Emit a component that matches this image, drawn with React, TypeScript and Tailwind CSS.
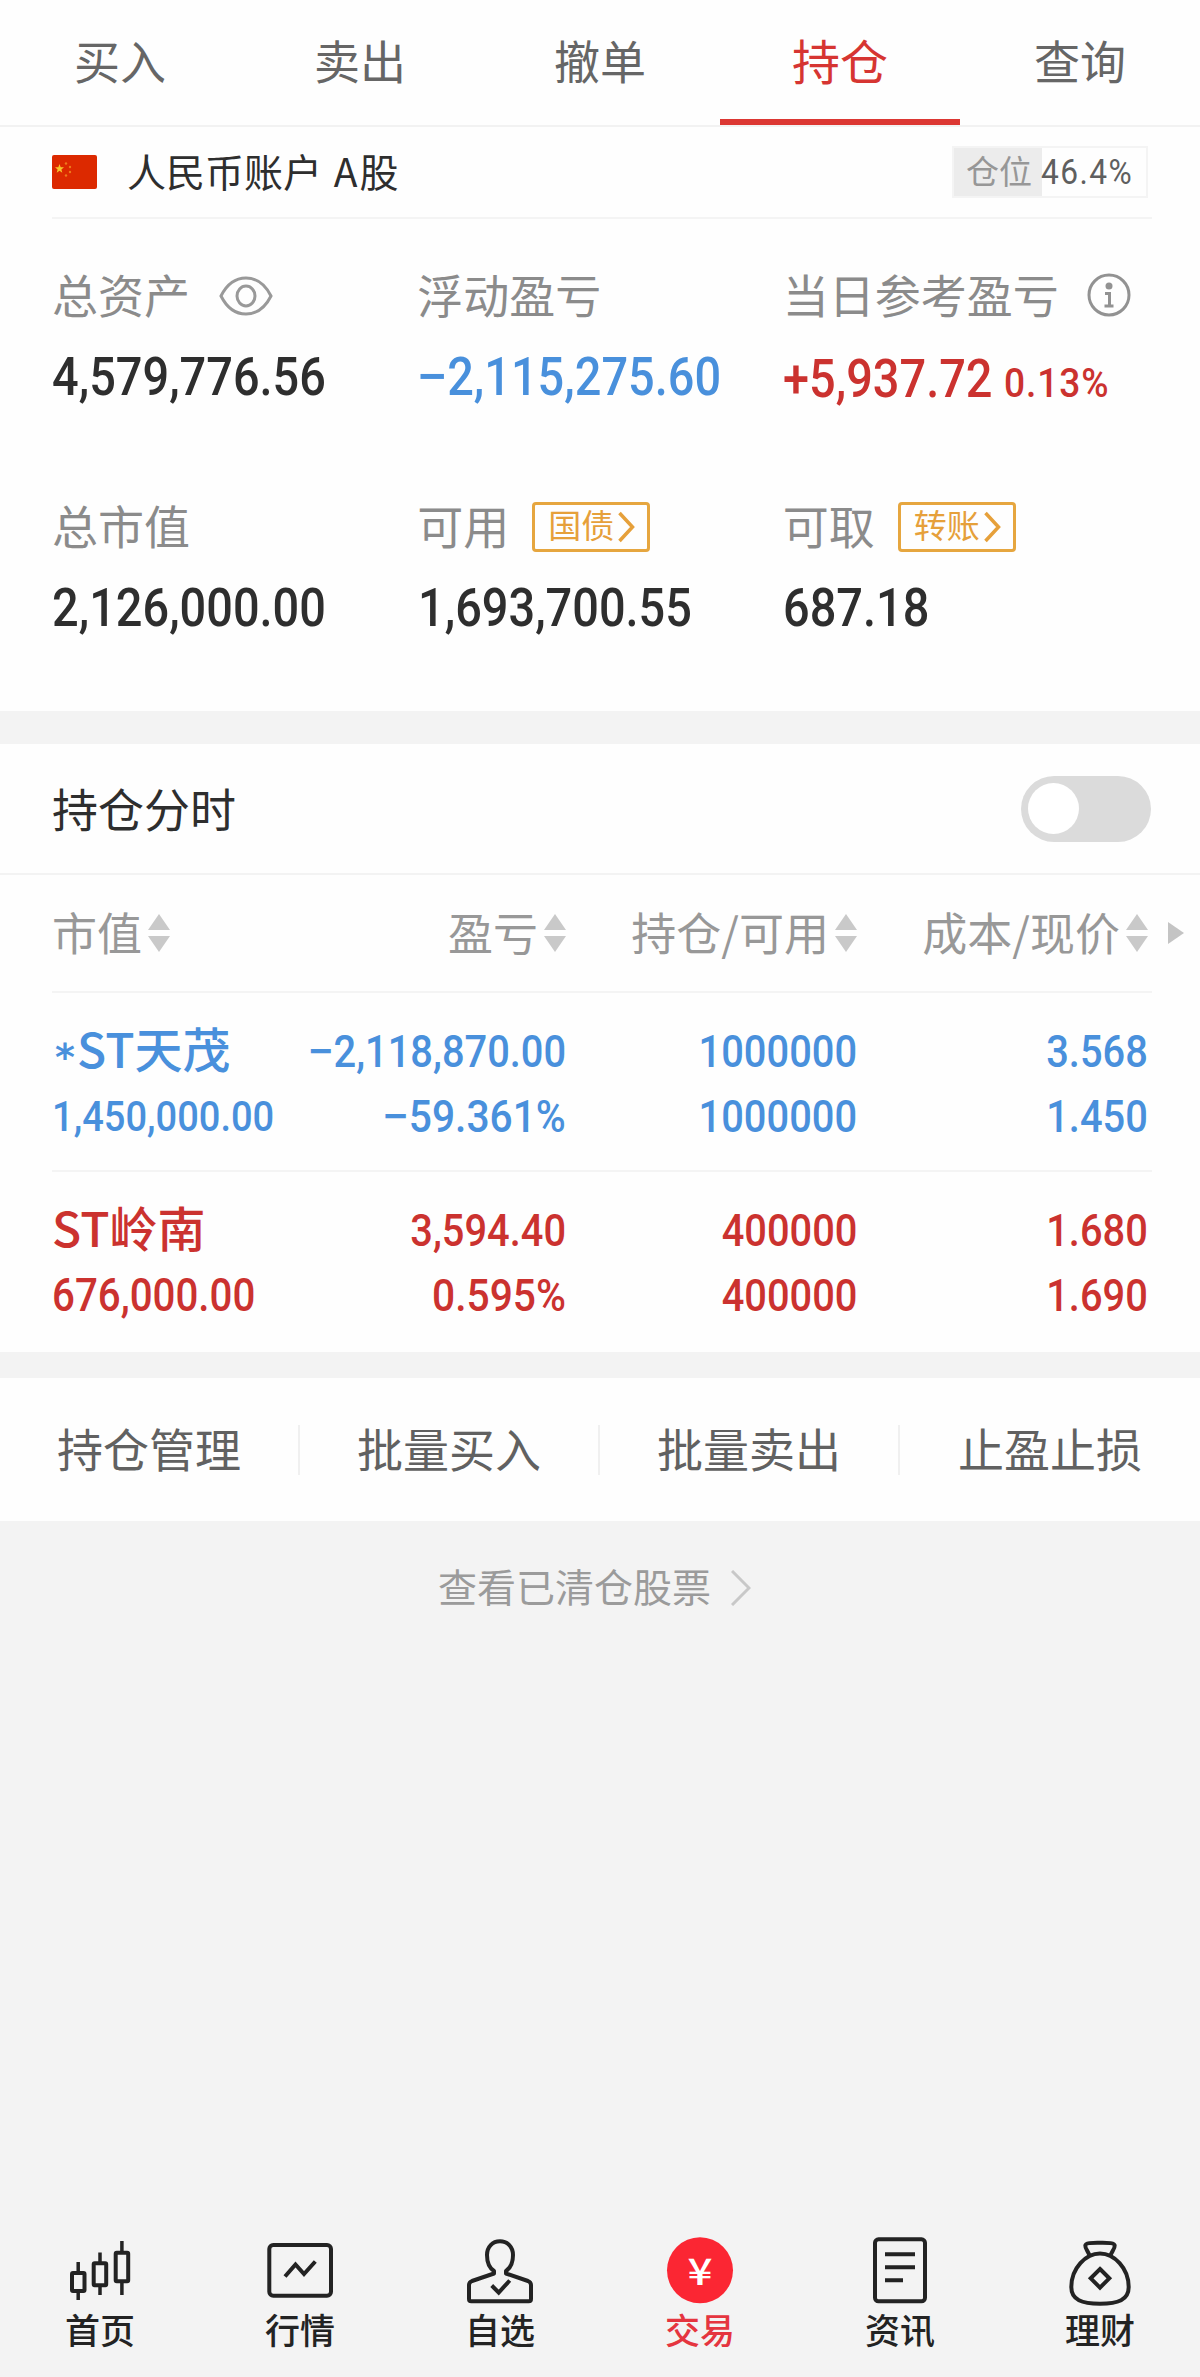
import { ReactNode } from "react";

const tabs = ["买入", "卖出", "撤单", "持仓", "查询"];
const actions = ["持仓管理", "批量买入", "批量卖出", "止盈止损"];

const holdings = [
  {
    star: true,
    name: "ST天茂",
    color: "text-[#4990dc]",
    value: "1,450,000.00",
    valueSize: "text-[43px]",
    cols: [
      ["−2,118,870.00", "−59.361%"],
      ["1000000", "1000000"],
      ["3.568", "1.450"],
    ],
  },
  {
    star: false,
    name: "ST岭南",
    color: "text-[#cb322f]",
    value: "676,000.00",
    valueSize: "text-[45.5px]",
    cols: [
      ["3,594.40", "0.595%"],
      ["400000", "400000"],
      ["1.680", "1.690"],
    ],
  },
];

function Num({ children, className = "" }: { children: string; className?: string }) {
  const negative = children.startsWith("−");
  const scale = children.endsWith("%") ? "scale-x-[.905]" : "scale-x-[.885]";
  return (
    <span className={`inline-block whitespace-nowrap font-[Roboto,sans-serif] font-medium leading-none ${scale} ${className}`}>
      {negative && <span className="mr-[2px] inline-block scale-x-[1.2]">−</span>}
      {negative ? children.slice(1) : children}
    </span>
  );
}

function Label({ children }: { children: ReactNode }) {
  return <div className="flex h-12 items-center text-[46px] leading-none text-[#8b8b8b]">{children}</div>;
}

function Tag({ children }: { children: ReactNode }) {
  return (
    <button className="ml-[23px] mt-[5px] flex h-[50px] w-[118px] items-center rounded-[4px] border-[3px] border-[#e6a63f] pl-[13px] text-[33px] leading-none text-[#e6a03a]">
      <span className="-mt-1 whitespace-nowrap">{children}</span>
      <svg className="ml-[4px] h-8 w-[17px] shrink-0" viewBox="0 0 17 32" fill="none" stroke="currentColor" strokeWidth="3.5">
        <path d="M1.5 2 14.5 16 1.5 30" />
      </svg>
    </button>
  );
}

function Sort() {
  return (
    <svg className="ml-[6px] mt-[3px] h-[38px] w-[22px] shrink-0" viewBox="0 0 22 38" fill="#c9c9c9">
      <path d="M11 0 22 16H0ZM0 22H22L11 38Z" />
    </svg>
  );
}

function NavItem({ label, active = false, children }: { label: string; active?: boolean; children: ReactNode }) {
  return (
    <a className={`flex w-[200px] flex-col items-center ${active ? "text-[#e5353f]" : "text-[#232323]"}`}>
      <svg className="h-[72px] w-20 overflow-visible" viewBox="0 0 80 72" fill="none" stroke="currentColor" strokeWidth="4">
        {children}
      </svg>
      <span className="mt-[5px] text-[35px] font-medium leading-none">{label}</span>
    </a>
  );
}

export default function App() {
  return (
    <main className="flex h-[2377px] w-[1200px] flex-col overflow-hidden bg-[#f3f3f3] font-['Noto_Sans_CJK_SC',sans-serif] text-[#2e2e2e]">
      <nav className="flex h-[127px] border-b-2 border-[#f2f2f2] bg-[#fefefe]">
        {tabs.map((tab) =>
          tab === "持仓" ? (
            <a key={tab} className="flex w-[240px] items-center justify-center border-b-[6px] border-[#dc3733] pb-[2px] text-[48px] leading-none text-[#d63532]">
              {tab}
            </a>
          ) : (
            <a key={tab} className="flex w-[240px] items-center justify-center pb-[8px] text-[46px] leading-none text-[#666]">
              {tab}
            </a>
          )
        )}
      </nav>

      <section className="h-[584px] bg-[#fefefe]">
        <div className="ml-[52px] mr-[48px] flex h-[92px] items-center border-b-2 border-[#f4f4f4]">
          <svg className="h-[34px] w-[45px]" viewBox="0 0 45 34">
            <rect width="45" height="34" rx="2" fill="#dc2900" />
            <path d="m7.5 9 1.2 3.2 3.3.1-2.6 2.1.9 3.3-2.8-1.9-2.8 1.9.9-3.3L3 12.300l3.300-.1z" fill="#f7c52c" />
            <g fill="#ee7a1c">
              <circle cx="14" cy="8.500" r="1.200" />
              <circle cx="18" cy="12" r="1.200" />
              <circle cx="18" cy="17" r="1.200" />
              <circle cx="14" cy="20.500" r="1.200" />
            </g>
          </svg>
          <span className="-mt-[3px] ml-[30px] text-[39px] leading-none">人民币账户<span className="ml-[3px]"> A</span><span className="ml-[2px]">股</span></span>
          <div className="ml-auto mr-[4px] flex h-[52px] w-[196px] items-center border-2 border-[#f4f4f4]">
            <span className="flex h-full w-[88px] items-center bg-[#ececec] pb-[4px] pl-[12px] text-[33px] leading-none text-[#979797]">仓位</span>
            <Num className="-ml-[1px] origin-left text-[35px] font-normal! tracking-[1.6px] text-[#5f5f5f]">46.4%</Num>
          </div>
        </div>

        <div className="grid auto-rows-[231px] grid-cols-3 px-[52px] pt-[50px]">
          <div>
            <Label>
              总资产
              <svg className="ml-[29px] mt-[5px] h-10 w-[54px]" viewBox="0 0 54 40" fill="none" stroke="#999" strokeWidth="3">
                <path d="M2 20C8 8 17 2 27 2s19 6 25 18C46 32 37 38 27 38S8 32 2 20Z" />
                <ellipse cx="27" cy="20" rx="9" ry="10" />
              </svg>
            </Label>
            <Num className="mt-[34px] origin-left text-[53px]">4,579,776.56</Num>
          </div>
          <div>
            <Label>浮动盈亏</Label>
            <Num className="ml-[2px] mt-[34px] origin-left text-[53px] text-[#4990dc]">−2,115,275.60</Num>
          </div>
          <div>
            <Label>
              当日参考盈亏
              <svg className="ml-[28px] mt-[4px] h-11 w-11" viewBox="0 0 44 44" fill="none" stroke="#929292" strokeWidth="3">
                <circle cx="22" cy="22" r="20" />
                <circle cx="22" cy="13" r="3.500" fill="#929292" stroke="none" />
                <path d="M18 20.500h4.500V32M17.500 33h9" />
              </svg>
            </Label>
            <div className="mt-[36px] whitespace-nowrap text-[#cb322f]">
              <Num className="origin-left text-[53px]">+5,937.72</Num>
              <Num className="-ml-[15px] origin-left text-[41px] tracking-[1px]">0.13%</Num>
            </div>
          </div>
          <div>
            <Label>总市值</Label>
            <Num className="mt-[34px] origin-left text-[53px]">2,126,000.00</Num>
          </div>
          <div>
            <Label>可用<Tag>国债</Tag></Label>
            <Num className="ml-[1px] mt-[34px] origin-left text-[53px]">1,693,700.55</Num>
          </div>
          <div>
            <Label>可取<Tag>转账</Tag></Label>
            <Num className="mt-[34px] origin-left text-[53px]">687.18</Num>
          </div>
        </div>
      </section>

      <section className="mt-[33px] h-[608px] bg-[#fefefe]">
        <div className="flex h-[131px] items-center justify-between border-b-2 border-[#f3f3f3] pl-[52px] pr-[49px]">
          <h2 className="-mt-[3px] text-[46px] leading-none">持仓分时</h2>
          <div className="flex h-[66px] w-[130px] items-center rounded-full bg-[#dbdbdb] pl-[7px]">
            <div className="h-[51px] w-[51px] rounded-full bg-white" />
          </div>
        </div>

        <div className="grid h-[116px] grid-cols-[220px_294px_291px_291px_1fr] pb-[3px] pl-[52px] text-[45px] leading-none text-[#989898]">
          <div className="flex items-center">市值<Sort /></div>
          <div className="flex items-center justify-end">盈亏<Sort /></div>
          <div className="flex items-center justify-end">持仓/可用<Sort /></div>
          <div className="flex items-center justify-end">成本/现价<Sort /></div>
          <div className="flex items-center pl-[20px]">
            <svg className="mt-[2px] h-[22px] w-4" viewBox="0 0 16 22" fill="#c4c4c4">
              <path d="M0 0 16 11 0 22Z" />
            </svg>
          </div>
        </div>

        {holdings.map((item) => (
          <div key={item.name}>
            <div className="ml-[52px] mr-[48px] h-[2px] bg-[#f4f4f4]" />
            <div className={`grid h-[177px] grid-cols-[220px_294px_291px_291px] pl-[52px] pt-[26px] text-[45px] ${item.color}`}>
              <div>
                <div className="flex h-[65px] items-center whitespace-nowrap pb-[10px] text-[48px] font-medium leading-none">
                  {item.star && <span className="mt-[20px] w-[25px] pl-[3px] font-['DejaVu_Sans',sans-serif] text-[38px] font-bold">*</span>}
                  {item.name}
                </div>
                <div className="flex h-[65px] items-center">
                  <Num className={`origin-left ${item.valueSize}`}>{item.value}</Num>
                </div>
              </div>
              {item.cols.map(([top, bottom]) => (
                <div key={top}>
                  <div className="flex h-[65px] items-center justify-end">
                    <Num className="origin-right">{top}</Num>
                  </div>
                  <div className="flex h-[65px] items-center justify-end">
                    <Num className="origin-right">{bottom}</Num>
                  </div>
                </div>
              ))}
            </div>
          </div>
        ))}
      </section>

      <section className="mt-[26px] flex h-[143px] items-center bg-[#fefefe]">
        {actions.map((action) => (
          <button key={action} className="flex h-[50px] w-[300px] items-center justify-center border-r-2 border-[#f0f0f0] pb-[5px] text-[46px] leading-none text-[#616161] last:border-r-0">
            {action}
          </button>
        ))}
      </section>

      <div className="mt-[44px] flex h-[40px] items-center pl-[438px] text-[39px] leading-none text-[#9b9b9b]">
        查看已清仓股票
        <svg className="ml-[20px] mt-[5px] h-9 w-5" viewBox="0 0 20 36" fill="none" stroke="#c8c8c8" strokeWidth="3">
          <path d="M1 1 18 18 1 35" />
        </svg>
      </div>

      <footer className="mt-auto flex h-[143px]">
        <NavItem label="首页">
          <rect x="12" y="39" width="12.500" height="18" rx="1" />
          <rect x="33.700" y="29.300" width="12.500" height="22" rx="1" />
          <rect x="55.700" y="18.700" width="12.500" height="28.500" rx="1" />
          <path d="M18.200 28v10M18.200 58v8M40 18.500v10M40 52v9M61.900 7v11M61.900 48v13" strokeWidth="3.500" />
        </NavItem>
        <NavItem label="行情">
          <rect x="9.300" y="11" width="61.700" height="50.700" rx="4" />
          <path d="m25 42.500 10.500-12L44 40l11.300-12.500" />
        </NavItem>
        <NavItem label="自选">
          <path d="M34 39.500v-2.500C29.500 34 27 29 27 21c0-8 5.500-13.700 13-13.700S53 13 53 21c0 8-2.500 13-7 16v2.500l22 7.500q3 1.200 3 4v14q0 2.300-2.300 2.300H11.300Q9 67.300 9 65V51q0-2.800 3-4Z" strokeLinejoin="round" />
          <path d="m31.700 51.500 7 7 11-12" />
        </NavItem>
        <NavItem label="交易" active>
          <circle cx="40" cy="36.300" r="33" fill="#fb2633" stroke="none" />
          <text x="40" y="51" textAnchor="middle" fontSize="37" fontWeight="500" textLength="25" lengthAdjust="spacingAndGlyphs" fill="#fff" stroke="none">¥</text>
        </NavItem>
        <NavItem label="资讯">
          <rect x="15" y="5.300" width="50" height="62" rx="3.500" />
          <path d="M25 20.300h30M25 33.300h30M25 46.300h18" />
        </NavItem>
        <NavItem label="理财">
          <path d="M40 19.500C26 19.500 11.300 34 11.300 53c0 13 10.700 16.700 28.700 16.700S68.700 66 68.700 53C68.700 34 54 19.500 40 19.500Z" />
          <path d="M29.500 22c-.5-4-4.500-7-4.200-10.500C25.500 8.500 33 8.800 40 8.800s14.500-.3 14.700 2.700c.3 3.500-3.700 6.500-4.200 10.500" />
          <path d="m40 35 9.300 9.300L40 53.600l-9.300-9.300Z" />
        </NavItem>
      </footer>
    </main>
  );
}
